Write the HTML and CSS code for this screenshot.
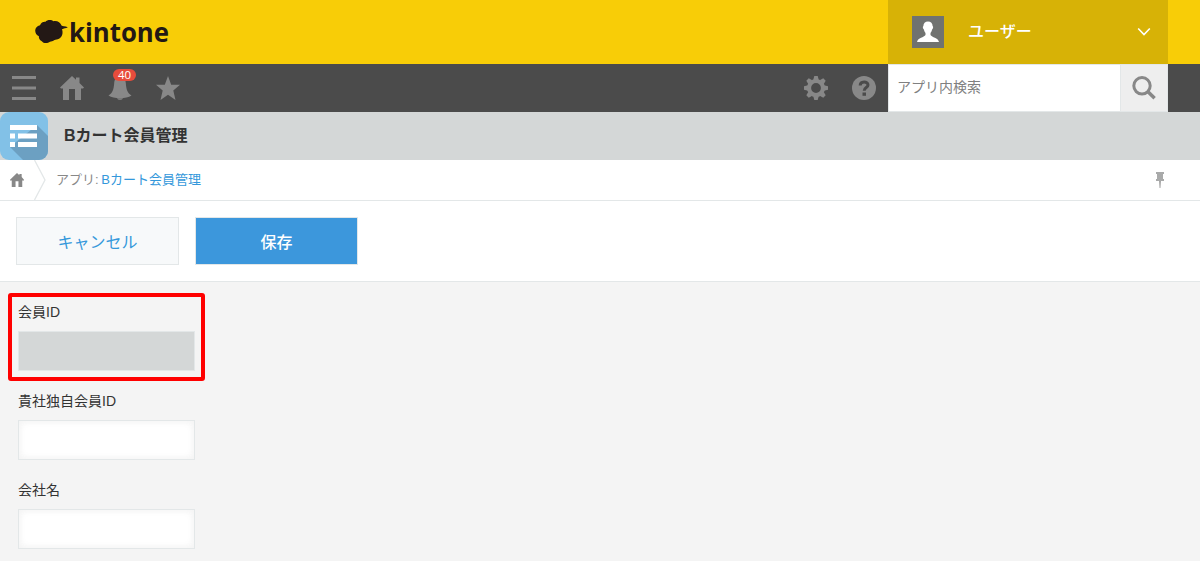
FILE: index.html
```html
<!DOCTYPE html>
<html lang="ja">
<head>
<meta charset="utf-8">
<title>Bカート会員管理</title>
<link rel="stylesheet" href="styles.css">
</head>
<body>
<header class="header">
  <svg class="logo" width="160" height="44" viewBox="32 10 160 44">
    <path fill="#231815" d="M35.200 30.500C35.300 28 37 25.800 40 25.200C41 22.500 43.500 21.500 45.500 21.800C47 19.800 51.500 19.500 53.500 21.300C57 20.500 60.500 22.500 61.500 25.600C62.500 26.400 65 26.300 67.800 27.200C66 28.300 63.500 28.200 62 29.300C63.300 33 62.300 37 59 38.800C57.300 39.800 55.800 39.500 54.500 40C53 41.500 51 41.200 50 41.800C47.500 43.500 43.500 43.600 41.800 41.200C39.500 40 38.700 38.500 38.900 36.300C36.500 35.200 35.200 33 35.200 30.500Z"/>
    <text class="logo-text" x="69" y="42" textLength="100" lengthAdjust="spacingAndGlyphs">kintone</text>
  </svg>
  <div class="user">
    <svg class="avatar" width="32" height="32" viewBox="0 0 32 32"><rect width="32" height="32" fill="#707270"/><path fill="#fff" d="M16 5.500C18.900 5.500 20.600 7.400 20.600 10.100C21.700 10.700 21 12.800 20.100 13.500C19.800 15 19.200 16 18.500 17V19C20 21.500 26 21.500 27 26H5C6 21.500 12 21.500 13.500 19V17C12.800 16 12.200 15 11.900 13.500C11 12.800 10.300 10.700 11.400 10.100C11.400 7.400 13.100 5.500 16 5.500Z"/></svg>
    <span class="user-name">ユーザー</span>
    <svg class="caret" width="14" height="10" viewBox="0 0 14 10"><path d="M1.200 1.500L7 7.500L12.800 1.500" fill="none" stroke="#fff" stroke-width="1.600"/></svg>
  </div>
</header>

<nav class="toolbar">
  <div class="tools">
    <span class="tool"><svg width="24" height="24" viewBox="0 0 24 24"><path d="M0 0H24V3H0ZM0 10.500H24V13.500H0ZM0 21H24V24H0Z"/></svg></span>
    <span class="tool"><svg width="24" height="24" viewBox="0 0 24 24"><path d="M12 0L16 3.800V1.500H19.500V7L24 11.500L23 12.500H21V24H15V13H9V24H3V12.500H1L0 11.500Z"/></svg></span>
    <span class="tool"><svg width="24" height="24" viewBox="0 0 24 24"><path d="M12 1C16 1 17.500 3.500 17.800 7C18.200 13.500 19.500 17 23.500 19.500C20.500 21.500 17 22 12 22S3.500 21.500.500 19.500C4.500 17 5.800 13.500 6.200 7C6.500 3.500 8 1 12 1ZM9 22.300H15C14 24.300 10 24.300 9 22.300Z"/></svg><b class="badge">40</b></span>
    <span class="tool"><svg width="24" height="24" viewBox="0 0 24 24"><path d="M12 0L15.200 8.800H24L17.300 14.600L19.500 24L12 18.800L4.500 24L6.700 14.600L0 8.800H8.800Z"/></svg></span>
  </div>
  <div class="tools tools-right">
    <span class="tool"><svg width="24" height="24" viewBox="-12 -12 24 24">
      <circle r="7" fill="none" stroke="#888" stroke-width="4.200"/>
      <g id="teeth"><path d="M-2.800 -8L-1.700 -12H1.700L2.800 -8ZM-2.800 8L-1.700 12H1.700L2.800 8ZM-8 -2.800L-12 -1.700V1.700L-8 2.800ZM8 -2.800L12 -1.700V1.700L8 2.800Z"/></g>
      <use href="#teeth" transform="rotate(45)"/>
    </svg></span>
    <span class="tool"><svg width="24" height="24" viewBox="0 0 24 24"><circle cx="12" cy="12" r="12"/><path d="M8.200 9.500C8.200 4.900 16 4.900 16 9C16 11.800 12.200 11.300 12.200 14.800" fill="none" stroke="#4b4b4b" stroke-width="3"/><path class="cut" d="M10.500 16.500H14V19.800H10.500Z"/></svg></span>
  </div>
  <div class="search">
    <input class="search-input" type="text" placeholder="アプリ内検索">
    <button class="search-button" type="button"><svg width="24" height="24" viewBox="0 0 24 24" fill="none" stroke="#888"><circle cx="10" cy="9.800" r="8.200" stroke-width="3"/><path d="M15.500 15.300L22.600 22.200" stroke-width="3.500"/></svg></button>
  </div>
</nav>

<div class="app-title">
  <svg class="app-icon" width="48" height="48" viewBox="0 0 48 48">
    <defs><clipPath id="tile"><rect width="48" height="48" rx="9"/></clipPath></defs>
    <g clip-path="url(#tile)"><rect width="48" height="48" fill="#82c1e7"/><path fill="#6ca0c2" d="M37 13L48 24V48H23L10 35Z"/><path fill="#82c1e7" d="M10 18H15V30H10Z"/></g>
    <path fill="#fff" d="M10 13H37V18H10ZM10 21.500H15V26.500H10ZM18 21.500H37V26.500H18ZM10 30H15V35H10ZM18 30H37V35H18Z"/>
  </svg>
  <h1 class="app-name">Bカート会員管理</h1>
</div>

<div class="breadcrumb">
  <svg class="crumb-home" width="14" height="14" viewBox="0 0 24 24"><path fill="#888" d="M12 0L16 3.800V1.500H20V7L24 11.500V13H21V24H14.500V14H9.500V24H3V13H0V11.500Z"/></svg>
  <svg class="crumb-arrow" width="12" height="40" viewBox="0 0 12 40"><path d="M.500 0L11 20L.500 40" fill="none" stroke="#e3e7e8" stroke-width="1.300"/></svg>
  <span class="crumb-text">アプリ: <a class="crumb-link">Bカート会員管理</a></span>
  <svg class="pin" width="10" height="16" viewBox="0 0 10 16"><defs><linearGradient id="pin-fade" x2="0" y2="1"><stop stop-color="#a5a5a5"/><stop offset="1" stop-color="#d5d5d5"/></linearGradient></defs><path fill="#a9aaaa" d="M1 0H9V2H8V7H9V9H1V7H2V2H1Z"/><path fill="url(#pin-fade)" d="M4 9H6V16H4Z"/></svg>
</div>

<div class="actions">
  <button class="button cancel" type="button">キャンセル</button>
  <button class="button save" type="button">保存</button>
</div>

<main class="form">
  <div class="field highlighted"><label class="label">会員ID</label><input class="input disabled" type="text" disabled></div>
  <div class="field"><label class="label">貴社独自会員ID</label><input class="input" type="text"></div>
  <div class="field"><label class="label">会社名</label><input class="input" type="text"></div>
</main>
</body>
</html>
```
FILE: styles.css
```css
* { box-sizing: border-box; }
body {
  margin: 0;
  height: 561px;
  overflow: hidden;
  display: flex;
  flex-direction: column;
  background: #f4f4f4;
  color: #333;
  font-family: "Liberation Sans", "Noto Sans CJK JP", sans-serif;
}
svg { display: block; flex: none; }
input, button { font-family: inherit; margin: 0; }
.header { display: flex; flex: none; height: 64px; padding: 0 32px; background: #f8cd07; }
.logo { margin-top: 10px; overflow: visible; }
.logo-text { font: bold 27px "Open Sans", sans-serif; fill: #231815; }
.user { display: flex; align-items: center; width: 280px; margin-left: auto; padding: 0 17px 0 24px; background: #d7b206; }
.user-name { margin-left: 24px; color: #fff; font-size: 16px; line-height: 24px; font-weight: 500; }
.caret { margin-left: auto; }
.toolbar { display: flex; flex: none; height: 48px; padding-right: 32px; background: #4b4b4b; }
.tools { display: flex; }
.tools-right { margin-left: auto; }
.tool { position: relative; display: flex; align-items: center; justify-content: center; width: 48px; height: 48px; fill: #888; }
.cut { fill: #4b4b4b; }
.badge {
  position: absolute;
  left: 17px;
  top: 5px;
  width: 23px;
  height: 12px;
  border-radius: 6px;
  background: #e74c3c;
  color: #fff;
  font: 11.5px/11px "Open Sans", sans-serif;
  text-align: center;
}
.search { display: flex; width: 280px; border: 1px solid #e3e7e8; background: #fff; }
.search-input { flex: 1; min-width: 0; padding: 0 8px 2px; border: 0; background: #fff; font-size: 14px; }
.search-input::placeholder { color: #808080; }
.search-button { display: flex; align-items: center; justify-content: center; width: 47px; padding: 0; border: 0; border-left: 1px solid #e3e7e8; background: #eee; }
.app-title { display: flex; flex: none; align-items: center; gap: 16px; height: 48px; background: #d4d7d7; }
.app-name { margin: 0; font-size: 16px; line-height: 24px; font-weight: bold; }
.breadcrumb { display: flex; flex: none; align-items: center; height: 41px; padding: 0 35px 0 10px; border-bottom: 1px solid #e3e7e8; background: #fff; }
.crumb-arrow { margin-left: 10px; }
.crumb-text { margin-left: 10px; color: #888; font-size: 13px; line-height: 20px; white-space: nowrap; word-spacing: -1px; }
.crumb-link { color: #3498db; }
.pin { margin-left: auto; }
.actions { display: flex; flex: none; gap: 16px; height: 81px; padding: 16px; border-bottom: 1px solid #e3e7e8; background: #fff; }
.button { width: 163px; height: 48px; padding: 0; border: 1px solid #e3e7e8; font-size: 16px; }
.cancel { background: #f7f9fa; color: #3498db; }
.save { background: #3c97dc; color: #fff; font-weight: 500; }
.form { display: flex; flex-direction: column; align-items: flex-start; gap: 1px; padding: 11px 8px; }
.field { display: flex; flex: none; flex-direction: column; width: 197px; height: 88px; padding: 8px 10px 10px; }
.highlighted { padding: 4px 6px 6px; border: 4px solid #f00; border-radius: 3px; }
.label { height: 30px; font-size: 14px; line-height: 22px; }
.input { width: 177px; height: 40px; border: 1px solid #e3e7e8; background: #fff; box-shadow: inset 0 0 8px #f3f3f3, inset 0 0 6px #f5f5f5; }
.disabled { background: #d4d7d7; box-shadow: none; }
```
